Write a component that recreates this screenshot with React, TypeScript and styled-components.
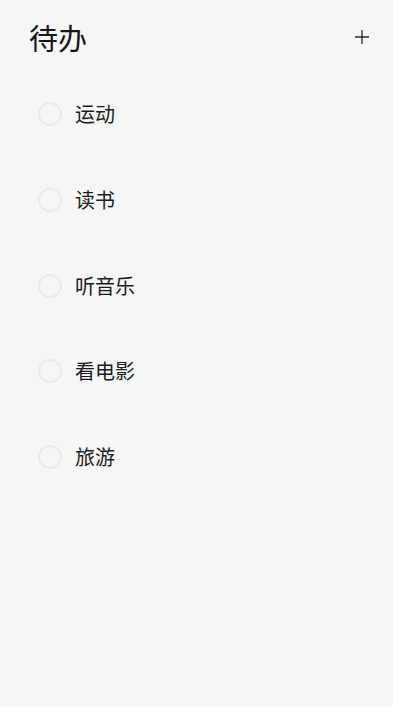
import React, { useState } from "react";
import styled, { createGlobalStyle } from "styled-components";

const GlobalStyle = createGlobalStyle`
	html, body {
		margin: 0;
		padding: 0;
		background: #f5f6f8;
		font-family: "Noto Sans CJK SC", "Noto Sans", sans-serif;
	}
`;

const Page = styled.div`
	width: 393px;
	min-height: 707px;
	background: #f5f6f8;
	box-sizing: border-box;
	padding: 0 15px 0 14px;
`;

const Header = styled.div`
	display: flex;
	align-items: center;
	justify-content: space-between;
	height: 74px;
	padding: 0 7px 0 15px;
`;

const Title = styled.h1`
	margin: 0;
	font-size: 29px;
	font-weight: 400;
	color: #151515;
	line-height: 1;
`;

const AddButton = styled.button`
	border: none;
	background: none;
	padding: 0;
	width: 18px;
	height: 18px;
	display: flex;
	align-items: center;
	justify-content: center;
	cursor: pointer;
`;

const List = styled.div`
	display: flex;
	flex-direction: column;
	gap: 15.75px;
	margin-top: 5px;
`;

const Card = styled.div`
	height: 70px;
	display: flex;
	align-items: center;
	gap: 13px;
	padding: 0 24px;
	border-radius: 14px;
	background: #f5f6f8;
`;

const Check = styled.span<{ done: boolean }>`
	width: 24px;
	height: 24px;
	box-sizing: border-box;
	border-radius: 50%;
	border: 2px solid #efe9e4;
	background: ${({ done }) => (done ? "#efe9e4" : "transparent")};
	flex-shrink: 0;
`;

const Label = styled.span`
	font-size: 20px;
	color: #1a1a1a;
	line-height: 1;
`;

const todos = ["运动", "读书", "听音乐", "看电影", "旅游"];

const App: React.FC = () => {
	const [done, setDone] = useState<string[]>([]);

	const toggle = (item: string) => {
		setDone((prev) =>
			prev.includes(item) ? prev.filter((d) => d !== item) : [...prev, item]
		);
	};

	return (
		<>
			<GlobalStyle />
			<Page>
				<Header>
					<Title>待办</Title>
					<AddButton aria-label="add">
						<svg width="16" height="16" viewBox="0 0 16 16">
							<path
								d="M8 1v14M1 8h14"
								stroke="#2a2a2a"
								strokeWidth="1.3"
								fill="none"
							/>
						</svg>
					</AddButton>
				</Header>
				<List>
					{todos.map((todo) => (
						<Card key={todo} onClick={() => toggle(todo)}>
							<Check done={done.includes(todo)} />
							<Label>{todo}</Label>
						</Card>
					))}
				</List>
			</Page>
		</>
	);
};

export default App;
